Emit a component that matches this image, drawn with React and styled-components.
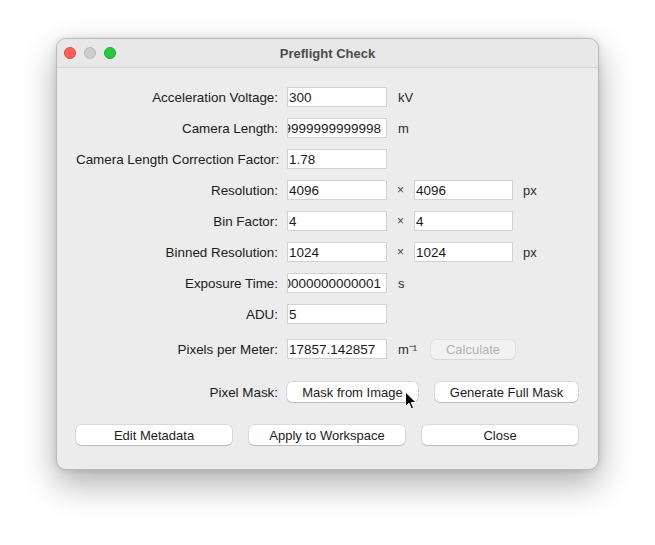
import React from "react";
import styled, { createGlobalStyle } from "styled-components";

const Global = createGlobalStyle`
  body {
    margin: 0;
    background: #ffffff;
    font-family: "Liberation Sans", Arial, sans-serif;
  }
`;

const Page = styled.div`
  padding: 38px 0 0 56px;
  width: 655px;
  height: 545px;
  box-sizing: border-box;
`;

const Window = styled.div`
  position: relative;
  width: 543px;
  height: 432px;
  box-sizing: border-box;
  background: #ececec;
  border: 1px solid #b9b9b9;
  border-radius: 10px;
  box-shadow: 0 14px 34px rgba(0, 0, 0, 0.32), 0 0 6px rgba(0, 0, 0, 0.12);
  overflow: hidden;
`;

const TitleBar = styled.div`
  position: relative;
  height: 28px;
  display: flex;
  align-items: center;
  justify-content: center;
  background: #e8e8e8;
  border-bottom: 1px solid #d2d2d2;
`;

const Lights = styled.div`
  position: absolute;
  left: 7px;
  top: 8px;
  display: flex;
  gap: 8px;
`;

const Light = styled.span`
  width: 12px;
  height: 12px;
  border-radius: 50%;
  box-sizing: border-box;
  background: ${(p) => p.$fill};
  border: 0.5px solid ${(p) => p.$edge};
`;

const Title = styled.div`
  font-size: 13px;
  font-weight: bold;
  color: #4b4b4b;
`;

const Content = styled.div`
  padding: 19px 20px 0 19px;
`;

const Form = styled.div`
  display: grid;
  grid-template-columns: 211px 100px 27px 99px auto;
  row-gap: 11px;
  align-items: center;
`;

const Label = styled.div`
  grid-column: 1;
  text-align: right;
  padding-right: 9px;
  font-size: 13.4px;
  color: #202020;
  white-space: nowrap;
  margin-top: ${(p) => p.$mt || 0}px;
`;

const Field = styled.div`
  height: 20px;
  box-sizing: border-box;
  background: #fff;
  border: 1px solid #d2d2d2;
  display: flex;
  align-items: center;
  justify-content: ${(p) => (p.$end ? "flex-end" : "flex-start")};
  padding: 0 ${(p) => (p.$end ? 5 : 1)}px 0 1px;
  overflow: hidden;
  font-size: 13.5px;
  color: #1a1a1a;
  white-space: nowrap;
  margin-top: ${(p) => p.$mt || 0}px;
`;

const Unit = styled.div`
  font-size: 13px;
  color: #2a2a2a;
  padding-left: ${(p) => (p.$center ? 0 : 11)}px;
  text-align: ${(p) => (p.$center ? "center" : "left")};
  margin-top: ${(p) => p.$mt || 0}px;
`;

const Times = styled(Unit)`
  font-size: 12px;
  color: #444;
`;

const TailUnit = styled.div`
  font-size: 13px;
  color: #2a2a2a;
  padding-left: 10px;
`;

const Button = styled.button`
  height: 20px;
  box-sizing: border-box;
  padding: 0 8px;
  border: none;
  border-radius: 5px;
  background: #ffffff;
  box-shadow: 0 0 0 0.5px rgba(0, 0, 0, 0.16), 0 1px 1px rgba(0, 0, 0, 0.14);
  font-family: inherit;
  font-size: 13px;
  color: #1c1c1c;
  white-space: nowrap;
  width: ${(p) => (p.$w ? p.$w + "px" : "auto")};
`;

const DisabledButton = styled(Button)`
  height: 19px;
  background: #f2f2f2;
  color: #b3b3b3;
  box-shadow: 0 0 0 0.5px rgba(0, 0, 0, 0.07), 0 0.5px 1px rgba(0, 0, 0, 0.06);
  margin-left: 17px;
  margin-top: ${(p) => p.$mt || 0}px;
`;

const MaskRow = styled.div`
  grid-column: 2 / 6;
  display: flex;
  gap: 17px;
  margin-top: 12px;
`;

const Footer = styled.div`
  display: grid;
  grid-template-columns: repeat(3, 1fr);
  gap: 17px;
  margin-top: 23px;
`;

const Cursor = styled.svg`
  position: absolute;
  left: 347px;
  top: 352px;
`;

const rows = [
  { label: "Acceleration Voltage:", value: "300", unit: "kV" },
  { label: "Camera Length:", value: "0.29999999999999998", unit: "m", end: true },
  { label: "Camera Length Correction Factor:", value: "1.78" },
  { label: "Resolution:", value: "4096", second: "4096", tail: "px" },
  { label: "Bin Factor:", value: "4", second: "4" },
  { label: "Binned Resolution:", value: "1024", second: "1024", tail: "px" },
  { label: "Exposure Time:", value: "0.7000000000000001", unit: "s", end: true },
  { label: "ADU:", value: "5" },
];

export default function App() {
  return (
    <Page>
      <Global />
      <Window>
        <TitleBar>
          <Lights>
            <Light $fill="#fe5f57" $edge="#e2463f" />
            <Light $fill="#cdcdcd" $edge="#b8b8b8" />
            <Light $fill="#28c840" $edge="#1dab2f" />
          </Lights>
          <Title>Preflight Check</Title>
        </TitleBar>
        <Content>
          <Form>
            {rows.map((r) => (
              <React.Fragment key={r.label}>
                <Label>{r.label}</Label>
                <Field $end={r.end}>{r.value}</Field>
                {r.second ? (
                  <>
                    <Times $center>×</Times>
                    <Field>{r.second}</Field>
                    <TailUnit>{r.tail || ""}</TailUnit>
                  </>
                ) : (
                  <>
                    <Unit>{r.unit || ""}</Unit>
                    <div />
                    <div />
                  </>
                )}
              </React.Fragment>
            ))}
            <Label $mt={4}>Pixels per Meter:</Label>
            <Field $mt={4}>17857.142857</Field>
            <Unit $mt={4}>m⁻¹</Unit>
            <div>
              <DisabledButton $w={84} $mt={4} disabled>
                Calculate
              </DisabledButton>
            </div>
            <div />
            <Label $mt={12}>Pixel Mask:</Label>
            <MaskRow>
              <Button $w={131}>Mask from Image</Button>
              <Button $w={143}>Generate Full Mask</Button>
            </MaskRow>
          </Form>
          <Footer>
            <Button>Edit Metadata</Button>
            <Button>Apply to Workspace</Button>
            <Button>Close</Button>
          </Footer>
        </Content>
        <Cursor width="14" height="20" viewBox="0 0 14 20">
          <path
            d="M1.5 1 L1.5 15.5 L5 12.2 L7.4 17.8 L9.6 16.9 L7.3 11.4 L12 11.4 Z"
            fill="#000"
            stroke="#fff"
            strokeWidth="1"
            strokeLinejoin="round"
          />
        </Cursor>
      </Window>
    </Page>
  );
}
